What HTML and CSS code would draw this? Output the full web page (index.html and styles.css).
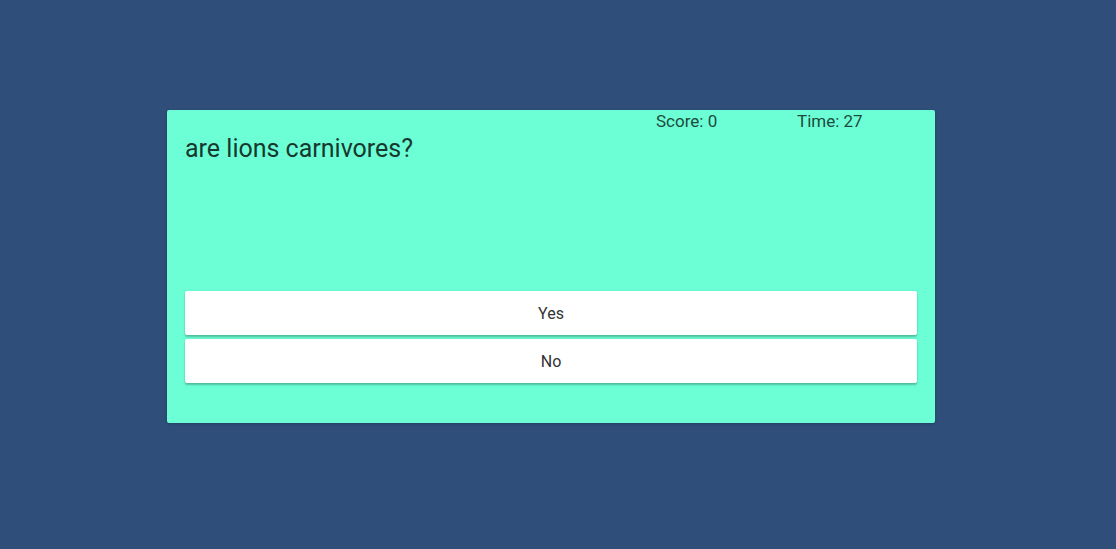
FILE: index.html
```html
<!DOCTYPE html>
<html lang="en">
<head>
<meta charset="utf-8">
<title>Quiz</title>
<link rel="stylesheet" href="styles.css">
</head>
<body>
<main class="stage">
  <section class="card">
    <header class="stats">
      <span class="stat stat-score">Score: 0</span>
      <span class="stat stat-time">Time: 27</span>
    </header>
    <h1 class="question">are lions carnivores?</h1>
    <div class="answers">
      <button class="answer" type="button">Yes</button>
      <button class="answer" type="button">No</button>
    </div>
  </section>
</main>
</body>
</html>
```
FILE: styles.css
```css
html, body {
  margin: 0;
  padding: 0;
  height: 100%;
}
body {
  background: #2f4e7a;
  font-family: Roboto, "Noto Sans", sans-serif;
}
.stage {
  padding-top: 110px;
  padding-left: 167px;
}
.card {
  box-sizing: border-box;
  width: 768px;
  height: 313px;
  background: #6cffd5;
  border-radius: 2px;
  padding: 0 18px;
  box-shadow: 0 1px 3px rgba(0,0,0,0.2);
  display: flex;
  flex-direction: column;
}
.stats {
  display: flex;
  padding: 1px 0 0 471px;
  line-height: 20px;
  color: #1e4a3e;
  font-size: 17px;
}
.stat-score {
  width: 141px;
}
.question {
  margin: 2px 0 0;
  font-weight: 400;
  font-size: 25px;
  line-height: 32px;
  color: #17382f;
}
.answers {
  margin-top: 126px;
  display: flex;
  flex-direction: column;
  gap: 4px;
}
.answer {
  height: 44px;
  border: 0;
  border-radius: 2px;
  background: #fff;
  font-family: Roboto, "Noto Sans", sans-serif;
  font-size: 16px;
  color: #333;
  box-shadow: 0 2px 2px rgba(0,0,0,0.24), 0 0 2px rgba(0,0,0,0.12);
}
```
